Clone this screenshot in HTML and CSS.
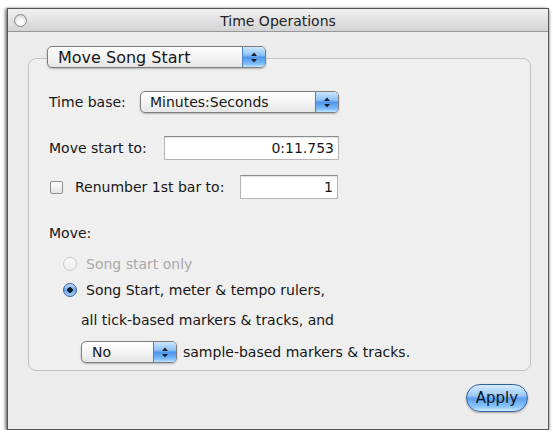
FILE: index.html
```html
<!DOCTYPE html>
<html lang="en">
<head>
    <meta charset="UTF-8">
    <meta name="viewport" content="width=device-width, initial-scale=1.0">
    <title>Time Operations</title>
    <link rel="stylesheet" href="styles.css">
</head>
<body>

<div class="window">
    <div class="titlebar">
        <span class="close-btn"></span>
        <span class="title">Time Operations</span>
        <span></span>
    </div>

    <div class="content">
        <div class="group">
            <div class="row row-mode">
                <div class="popup popup-mode">
                    <span class="popup-label">Move Song Start</span>
                    <span class="stepper">
                        <svg width="8" height="13" viewBox="0 0 8 13"><path d="M4 1.5 L7 5 H1Z M4 11.5 L7 8 H1Z" fill="#15202e"/></svg>
                    </span>
                </div>
            </div>

            <div class="row row-timebase">
                <span class="label label-timebase">Time base:</span>
                <div class="popup popup-timebase">
                    <span class="popup-label">Minutes:Seconds</span>
                    <span class="stepper">
                        <svg width="8" height="13" viewBox="0 0 8 13"><path d="M4 1.5 L7 5 H1Z M4 11.5 L7 8 H1Z" fill="#15202e"/></svg>
                    </span>
                </div>
            </div>

            <div class="row row-field">
                <span class="label label-start">Move start to:</span>
                <div class="field field-start">0:11.753</div>
            </div>

            <div class="row row-renumber">
                <span class="checkbox"></span>
                <span class="label label-renumber">Renumber 1st bar to:</span>
                <div class="field field-bar">1</div>
            </div>

            <div class="row row-move">
                <span class="label">Move:</span>
            </div>

            <div class="row row-radio row-radio-first disabled">
                <span class="radio"></span>
                <span class="label">Song start only</span>
            </div>

            <div class="row row-radio row-radio-second">
                <span class="radio checked"></span>
                <span class="label">Song Start, meter &amp; tempo rulers,</span>
            </div>

            <div class="row row-indent row-tick">
                <span class="label">all tick-based markers &amp; tracks, and</span>
            </div>

            <div class="row row-indent row-sample">
                <div class="popup popup-small">
                    <span class="popup-label">No</span>
                    <span class="stepper">
                        <svg width="8" height="13" viewBox="0 0 8 13"><path d="M4 1.5 L7 5 H1Z M4 11.5 L7 8 H1Z" fill="#15202e"/></svg>
                    </span>
                </div>
                <span class="label label-sample">sample-based markers &amp; tracks.</span>
            </div>
        </div>

        <div class="actions">
            <button class="aqua-btn">Apply</button>
        </div>
    </div>
</div>

</body>
</html>
```

FILE: styles.css
```css
body {
    margin: 0;
    padding: 0;
    background-color: #ffffff;
    font-family: "DejaVu Sans", Verdana, sans-serif;
    font-size: 14px;
    color: #161616;
}

.window {
    box-sizing: border-box;
    width: 542px;
    height: 422px;
    margin: 8px 0 0 7px;
    display: flex;
    flex-direction: column;
    background-color: #ececec;
    border: 1px solid #555555;
    box-shadow: 0 2px 3px rgba(0, 0, 0, 0.55), -2px 0 3px rgba(0, 0, 0, 0.4);
}

/* title bar */

.titlebar {
    height: 22px;
    display: grid;
    grid-template-columns: 1fr auto 1fr;
    align-items: center;
    background: linear-gradient(#f0f0f0, #d4d4d4);
    border-bottom: 1px solid #979797;
}

.close-btn {
    box-sizing: border-box;
    width: 13px;
    height: 13px;
    margin-left: 6px;
    border-radius: 50%;
    border: 1px solid #8a8a8a;
    background: radial-gradient(circle at 50% 65%, #fbfbfb 30%, #d4d4d4 80%);
}

.title {
    font-size: 14px;
    color: #222222;
    padding-top: 1px;
}

/* content */

.content {
    flex: 1;
    display: flex;
    flex-direction: column;
}

.group {
    box-sizing: border-box;
    margin: 26px 17px 0 20px;
    height: 313px;
    padding: 0 0 0 20px;
    border: 1px solid #c3c3c3;
    border-radius: 8px;
    background-color: #efefef;
}

.row {
    display: flex;
    align-items: center;
}

.label {
    white-space: nowrap;
}

.row-mode {
    height: 22px;
    margin: -13px 0 0 -2px;
}

.row-timebase {
    height: 22px;
    margin-top: 23px;
}

.label-timebase {
    width: 91px;
}

.row-field {
    height: 24px;
    margin-top: 23px;
}

.label-start {
    width: 115px;
}

.row-renumber {
    height: 24px;
    margin-top: 15px;
}

.label-renumber {
    margin-left: 12px;
    width: 165px;
}

.row-move {
    height: 16px;
    margin-top: 26px;
}

.row-radio {
    height: 18px;
    padding-left: 14px;
}

.row-radio .label {
    margin-left: 9px;
}

.row-radio-first {
    margin-top: 14px;
}

.row-radio-second {
    margin-top: 8px;
}

.disabled {
    color: #a9a9a9;
}

.row-indent {
    padding-left: 32px;
}

.row-tick {
    height: 18px;
    margin-top: 12px;
}

.row-sample {
    height: 22px;
    margin-top: 12px;
}

.label-sample {
    margin-left: 6px;
}

/* pop-up buttons */

.popup {
    box-sizing: border-box;
    height: 22px;
    display: flex;
    align-items: stretch;
    border: 1px solid #7d7d7d;
    border-radius: 5px;
    background: linear-gradient(#ffffff, #f4f4f4 50%, #e6e6e6);
    box-shadow: 0 1px 2px rgba(0, 0, 0, 0.25);
    overflow: hidden;
}

.popup-label {
    flex: 1;
    display: flex;
    align-items: center;
    padding-left: 10px;
    white-space: nowrap;
}

.popup-mode {
    width: 219px;
}

.popup-mode .popup-label {
    font-size: 16px;
}

.popup-timebase {
    width: 199px;
}

.popup-timebase .popup-label {
    padding-left: 9px;
}

.popup-small {
    width: 96px;
}

.stepper {
    width: 22px;
    display: flex;
    align-items: center;
    justify-content: center;
    border-left: 1px solid #4f7fc2;
    background: linear-gradient(#cde6fd, #8fc2f6 40%, #4f95ea 52%, #7dbdf9 85%, #c2e6ff);
}

/* text fields */

.field {
    box-sizing: border-box;
    height: 24px;
    padding: 3px 4px 0 0;
    text-align: right;
    background-color: #ffffff;
    border: 1px solid #b5b5b5;
    border-top-color: #8c8c8c;
    box-shadow: inset 0 1px 1px rgba(0, 0, 0, 0.12);
}

.field-start {
    width: 175px;
}

.field-bar {
    width: 98px;
}

/* checkbox and radios */

.checkbox {
    box-sizing: border-box;
    width: 13px;
    height: 13px;
    margin-left: 1px;
    border: 1px solid #8e8e8e;
    border-radius: 2px;
    background: linear-gradient(#ffffff, #e4e4e4);
}

.radio {
    box-sizing: border-box;
    width: 14px;
    height: 14px;
    border-radius: 50%;
    border: 1px solid #c7c7c7;
    background: linear-gradient(#fbfbfb, #ececec);
}

.radio.checked {
    border-color: #3c5f98;
    background: radial-gradient(circle, #0d1a2c 0 2.5px, transparent 3px),
        linear-gradient(#c5e1fd, #6aa6ee 50%, #9fd0fb);
}

/* bottom button */

.actions {
    display: flex;
    justify-content: flex-end;
    padding: 13px 20px 0 0;
}

.aqua-btn {
    box-sizing: border-box;
    width: 62px;
    height: 28px;
    font-family: "DejaVu Sans", Verdana, sans-serif;
    font-size: 15px;
    color: #0c1626;
    border: 1px solid #35609e;
    border-radius: 14px;
    background: linear-gradient(#d6ebfe, #9ccaf6 40%, #5d9fec 52%, #8cc7fb 85%, #d0eeff);
    box-shadow: 0 1px 2px rgba(0, 0, 0, 0.3);
    padding: 0;
}
```
